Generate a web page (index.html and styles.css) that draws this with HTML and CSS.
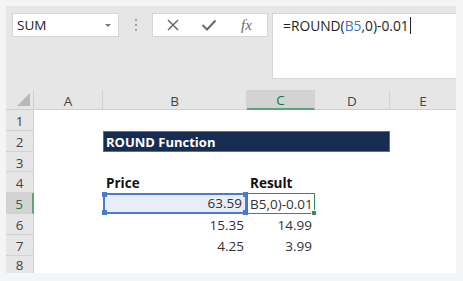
FILE: index.html
```html
<!DOCTYPE html>
<html>
<head>
<meta charset="utf-8">
<link rel="stylesheet" href="styles.css">
</head>
<body>
<div class="page">
  <div class="frame">
    <div class="fbar">
      <div class="namebox"><span>SUM</span><span class="caret"></span></div>
      <div class="dots"><i></i><i></i><i></i></div>
      <div class="fxbox">
        <svg class="ico" width="14" height="14" viewBox="0 0 14 14"><path d="M2 2 L12 12 M12 2 L2 12" stroke="#6a6a6a" stroke-width="1.5" fill="none"/></svg>
        <svg class="ico" width="16" height="14" viewBox="0 0 16 14"><path d="M1.5 7 L6 11.5 L14.5 2.5" stroke="#6a6a6a" stroke-width="2" fill="none"/></svg>
        <span class="fx">fx</span>
      </div>
      <div class="formula"><span>=ROUND(</span><span class="ref">B5</span><span>,0)-0.01</span><span class="cursor"></span></div>
    </div>
    <div class="grid">
      <div class="corner"><span class="tri"></span></div>
      <div class="ch">A</div>
      <div class="ch">B</div>
      <div class="ch active">C</div>
      <div class="ch">D</div>
      <div class="ch last">E</div>

      <div class="rh">1</div><div class="c"></div><div class="c"></div><div class="c"></div><div class="c"></div><div class="c"></div>
      <div class="rh">2</div><div class="c"></div><div class="title">ROUND Function</div><div class="c"></div>
      <div class="rh">3</div><div class="c"></div><div class="c"></div><div class="c"></div><div class="c"></div><div class="c"></div>
      <div class="rh">4</div><div class="c"></div><div class="c b">Price</div><div class="c b">Result</div><div class="c"></div><div class="c"></div>
      <div class="rh active">5</div><div class="c"></div><div class="c num sel">63.59<i class="h tl"></i><i class="h bl"></i><i class="h tr"></i><i class="h br"></i></div><div class="c edit">B5,0)-0.01<i class="fill"></i></div><div class="c"></div><div class="c"></div>
      <div class="rh">6</div><div class="c"></div><div class="c num">15.35</div><div class="c num">14.99</div><div class="c"></div><div class="c"></div>
      <div class="rh">7</div><div class="c"></div><div class="c num">4.25</div><div class="c num">3.99</div><div class="c"></div><div class="c"></div>
      <div class="rh lastrow">8</div><div class="c"></div><div class="c"></div><div class="c"></div><div class="c"></div><div class="c"></div>
    </div>
  </div>
</div>
</body>
</html>
```

FILE: styles.css
```css
* { box-sizing: border-box; }
html, body { margin: 0; padding: 0; }
body {
  background: #f4f5f7;
  font-family: "Open Sans", "Liberation Sans", sans-serif;
  color: #222;
  width: 463px;
  height: 281px;
  overflow: hidden;
}
.page { padding: 6px 7px 0 6px; }
.frame {
  width: 450px;
  height: 267px;
  background: #e6e6e6;
  overflow: hidden;
  display: flex;
  flex-direction: column;
}
.fbar {
  height: 84px;
  display: flex;
  align-items: flex-start;
  padding: 7px 0 0 6px;
  flex: none;
}
.namebox {
  width: 107px;
  height: 24px;
  background: #fff;
  border: 1px solid #d6d6d6;
  display: flex;
  align-items: center;
  justify-content: space-between;
  padding: 0 7px 0 4px;
  font-size: 13.5px;
  color: #222;
}
.caret {
  width: 0; height: 0;
  border-left: 3px solid transparent;
  border-right: 3px solid transparent;
  border-top: 3px solid #777;
}
.dots {
  width: 33px;
  height: 24px;
  display: flex;
  flex-direction: column;
  align-items: center;
  justify-content: center;
  gap: 3px;
}
.dots i { width: 2px; height: 2px; background: #a0a0a0; display: block; }
.fxbox {
  width: 116px;
  height: 24px;
  background: #fff;
  border: 1px solid #d6d6d6;
  display: flex;
  align-items: center;
  padding-left: 13px;
  gap: 21px;
}
.ico { display: block; }
.fx {
  font-family: "Liberation Serif", "DejaVu Serif", serif;
  font-style: italic;
  font-size: 15px;
  color: #666;
  margin-left: 3px;
}
.formula {
  margin-left: 4px;
  width: 184px;
  height: 66px;
  background: #fff;
  border: 1px solid #d6d6d6;
  border-right: none;
  padding: 3px 0 0 10px;
  font-size: 13.8px;
  color: #1e1e1e;
  display: flex;
  align-items: flex-start;
  line-height: 18px;
}
.ref { color: #3d74c9; }
.cursor { width: 1px; height: 17px; background: #222; margin-left: 1px; }
.grid {
  display: grid;
  grid-template-columns: 28px 69px 144px 68px 75px 66px;
  grid-template-rows: 20px 21px 21px 20px 21px 21px 21px 21px 17px;
  background: #fff;
  flex: 1;
  font-size: 13.5px;
}
.corner {
  background: #e6e6e6;
  border-right: 1px solid #cfcfcf;
  border-bottom: 1px solid #cfcfcf;
  position: relative;
}
.tri {
  position: absolute;
  right: 3px; bottom: 3px;
  width: 0; height: 0;
  border-left: 13px solid transparent;
  border-bottom: 13px solid #b8b8b8;
}
.ch {
  background: #e6e6e6;
  border-right: 1px solid #d2d2d2;
  border-bottom: 1px solid #cfcfcf;
  display: flex;
  align-items: center;
  justify-content: center;
  color: #444;
  padding-top: 2px;
}
.ch.last { border-right: none; }
.ch.active {
  background: #d3d3d3;
  color: #217346;
  border-bottom: 2px solid #5aa57a;
}
.rh {
  background: #e6e6e6;
  border-right: 1px solid #cfcfcf;
  border-bottom: 1px solid #d2d2d2;
  display: flex;
  align-items: center;
  justify-content: center;
  color: #444;
  padding-top: 2px;
}
.rh.lastrow { border-bottom: none; padding-top: 0; }
.rh.active {
  background: #d3d3d3;
  color: #217346;
  border-right: 2px solid #5aa57a;
}
.c {
  display: flex;
  align-items: flex-end;
  padding: 0 3px 1px 3px;
  white-space: nowrap;
  line-height: 18px;
  position: relative;
}
.b { font-weight: 700; color: #111; }
.num { justify-content: flex-end; color: #333; }
.title {
  grid-column: 3 / 6;
  background: #172c51;
  border: 1px solid #5d6f8e;
  color: #fff;
  font-weight: 700;
  display: flex;
  align-items: center;
  padding: 1px 0 0 2px;
  font-size: 13px;
}
.sel {
  background: #e8eef8;
  border: 2px solid #4a7bd0;
  padding-bottom: 0;
}
.edit {
  border: 1.5px solid #3a8a5c;
  padding-left: 2px;
  color: #333;
  padding-bottom: 0;
}
.h {
  position: absolute;
  width: 5px; height: 5px;
  background: #4a7bd0;
}
.tl { left: -3px; top: -3px; }
.bl { left: -3px; bottom: -3px; }
.tr { right: -3px; top: -3px; }
.br { right: -3px; bottom: -3px; }
.fill {
  position: absolute;
  right: -3px; bottom: -3px;
  width: 4px; height: 4px;
  background: #3a8a5c;
  border: 1px solid #fff;
  box-sizing: content-box;
}
```
